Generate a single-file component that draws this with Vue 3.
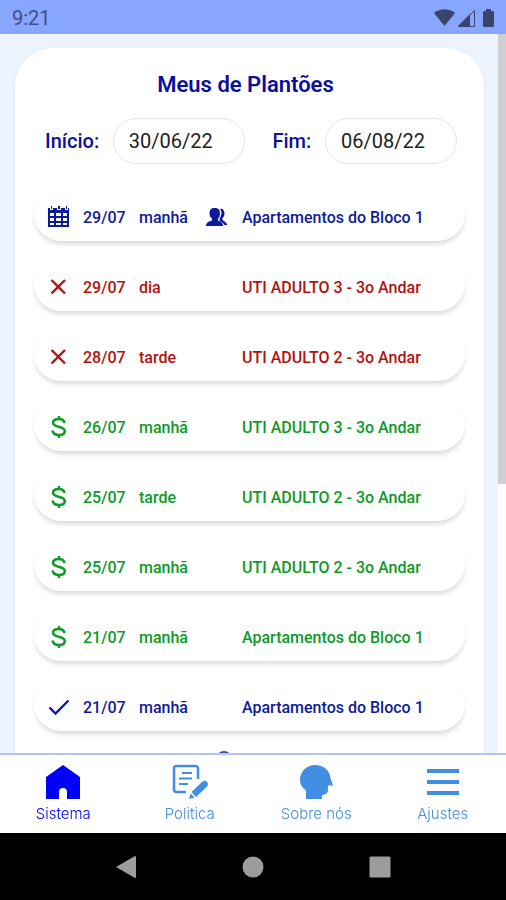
<script setup>
import { ref, onMounted, onUnmounted } from 'vue'

const inicio = ref('30/06/22')
const fim = ref('06/08/22')

const plantoes = [
  { data: '29/07', turno: 'manhã', local: 'Apartamentos do Bloco 1', status: 'agendado', troca: true },
  { data: '29/07', turno: 'dia', local: 'UTI ADULTO 3 - 3o Andar', status: 'cancelado' },
  { data: '28/07', turno: 'tarde', local: 'UTI ADULTO 2 - 3o Andar', status: 'cancelado' },
  { data: '26/07', turno: 'manhã', local: 'UTI ADULTO 3 - 3o Andar', status: 'pago' },
  { data: '25/07', turno: 'tarde', local: 'UTI ADULTO 2 - 3o Andar', status: 'pago' },
  { data: '25/07', turno: 'manhã', local: 'UTI ADULTO 2 - 3o Andar', status: 'pago' },
  { data: '21/07', turno: 'manhã', local: 'Apartamentos do Bloco 1', status: 'pago' },
  { data: '21/07', turno: 'manhã', local: 'Apartamentos do Bloco 1', status: 'confirmado' }
]

const abas = [
  { id: 'sistema', nome: 'Sistema' },
  { id: 'politica', nome: 'Politica' },
  { id: 'sobre', nome: 'Sobre nós' },
  { id: 'ajustes', nome: 'Ajustes' }
]
const abaAtiva = ref('sistema')

const lista = ref(null)
const barra = ref({ altura: 0, topo: 0 })

const atualizarBarra = () => {
  const el = lista.value
  barra.value = {
    altura: (el.clientHeight / el.scrollHeight) * 100,
    topo: (el.scrollTop / el.clientHeight) * 100
  }
}

onMounted(() => {
  atualizarBarra()
  window.addEventListener('resize', atualizarBarra)
})

onUnmounted(() => {
  window.removeEventListener('resize', atualizarBarra)
})
</script>

<template>
  <div class="tela">
    <header class="status-bar">
      <span>9:21</span>
      <svg width="64" height="20" viewBox="0 0 64 20" fill="#37456b">
        <path d="M0 5C6 0 15 0 21 5L10.500 18z" />
        <path d="M24 18L36 6V18z" />
        <path d="M24.500 18.500L40.500 2.500V18.500z" fill="none" stroke="#37456b" />
        <path d="M52 1h5v2h2q1 0 1 1v14q0 1-1 1h-9q-1 0-1-1v-14q0-1 1-1h2z" />
      </svg>
    </header>

    <div class="corpo">
      <main ref="lista" class="conteudo" @scroll="atualizarBarra">
        <section class="cartao">
          <h1>Meus de Plantões</h1>

          <div class="filtros">
            <label for="inicio">Início:</label>
            <input id="inicio" v-model="inicio" type="text">
            <label for="fim">Fim:</label>
            <input id="fim" v-model="fim" type="text">
          </div>

          <ul class="plantoes">
            <li v-for="(p, i) in plantoes" :key="i" class="plantao" :class="p.status">
              <svg v-if="p.status === 'agendado'" width="24" height="24" viewBox="0 0 24 24" fill="currentColor">
                <path fill-rule="evenodd" d="M1 3h2v2h3V3h4v2h4V3h4v2h3V3h1v19H1zM3 8v3h4V8zM9 8v3h5V8zM16 8v3h4V8zM3 13v3h4v-3zM9 13v3h5v-3zM16 13v3h4v-3zM3 18v2h4v-2zM9 18v2h5v-2zM16 18v2h4v-2z" />
                <path d="M4 1h1v3H4zM11 1h2v3h-2zM19 1h1v3h-1z" />
              </svg>
              <svg v-else-if="p.status === 'cancelado'" width="24" height="24" viewBox="0 0 24 24" fill="none" stroke="currentColor" stroke-width="2.400">
                <path d="M4.500 5L18 18.500M18 5L4.500 18.500" />
              </svg>
              <svg v-else-if="p.status === 'pago'" width="24" height="24" viewBox="0 0 24 24" fill="none" stroke="currentColor" stroke-width="2.500">
                <path d="M17.500 8C17 5 15 4 12 4C8.500 4 6 5.500 6 7.800C6 13 17.800 10.500 17.800 16C17.800 18.500 15.500 20 12.200 20C8.500 20 6 18.500 5.500 15.500M12 1v3M12 20v3" />
              </svg>
              <svg v-else width="24" height="24" viewBox="0 0 24 24" fill="none" stroke="currentColor" stroke-width="2.400">
                <path d="M2.500 12.500l6 6L21.500 5.500" />
              </svg>
              <span>{{ p.data }}</span>
              <span>{{ p.turno }}</span>
              <span>
                <svg v-if="p.troca" width="24" height="24" viewBox="0 0 24 24" fill="currentColor">
                  <path d="M9.500 3c4 0 5.500 2 5.500 5.500 0 3-1 4-2 5v2c2 1 5 2 5 5.500H1c0-3.500 3-4.500 6-5.500v-2c-1-1-2.500-2-2.500-5C4.500 5 6 3 9.500 3z" />
                  <path d="M15 4c3-1 4.500 2 4.500 4.500 0 2-1 3.500-2 4.500v2c2 1 4 3 5 5h-3c-1-2-3-3-5-4v-2c2-4 3-7 .500-10z" />
                </svg>
              </span>
              <span>{{ p.local }}</span>
            </li>
          </ul>

          <div class="carregando" />
        </section>
      </main>
      <div class="trilho">
        <div class="polegar" :style="{ height: barra.altura + '%', transform: `translateY(${barra.topo}%)` }" />
      </div>
    </div>

    <nav class="abas">
      <button v-for="aba in abas" :key="aba.id" type="button" :class="{ ativa: aba.id === abaAtiva }" @click="abaAtiva = aba.id">
        <svg v-if="aba.id === 'sistema'" width="36" height="36" viewBox="0 0 36 36" fill="currentColor">
          <path d="M18 1L35 13V35H22V28a4 4 0 0 0-8 0V35H1V13z" />
        </svg>
        <svg v-else-if="aba.id === 'politica'" width="36" height="36" viewBox="0 0 36 36" fill="none" stroke="currentColor" stroke-width="2.500">
          <path d="M14 28H4.500a2.500 2.500 0 0 1-2.500-2.500V4.500A2.500 2.500 0 0 1 4.500 2H23.500A2.500 2.500 0 0 1 26 4.500V15" />
          <path d="M10 9H20M7 14.500H20M7 20H16" stroke-width="2.200" />
          <path d="M17 35l1.500-5.500 4 4zM19.500 28L30 18Q33 15.500 35 18Q37 20.500 34.500 23L24 33z" fill="currentColor" stroke="none" />
        </svg>
        <svg v-else-if="aba.id === 'sobre'" width="36" height="36" viewBox="0 0 36 36" fill="currentColor">
          <path d="M17 1C26 1 32 7 32.500 14L35 21.500H30V26.500Q29.500 30.500 24 31V35H8V26.500C4 24 2 20 2 16C2 8 8 1 17 1z" />
        </svg>
        <svg v-else width="36" height="36" viewBox="0 0 36 36" fill="none" stroke="currentColor" stroke-width="3.800">
          <path d="M2 7H34M2 18H34M2 29H34" />
        </svg>
        <span>{{ aba.nome }}</span>
      </button>
    </nav>

    <footer class="sistema">
      <button type="button" aria-label="Voltar">
        <svg width="24" height="24" viewBox="0 0 24 24" fill="currentColor"><path d="M2 12L21 1q1 0 1 1v20q0 1-1 1z" /></svg>
      </button>
      <button type="button" aria-label="Início">
        <svg width="24" height="24" viewBox="0 0 24 24" fill="currentColor"><circle cx="12" cy="12" r="10.500" /></svg>
      </button>
      <button type="button" aria-label="Recentes">
        <svg width="24" height="24" viewBox="0 0 24 24" fill="currentColor"><rect x="1.500" y="1.500" width="21" height="21" rx="1.500" /></svg>
      </button>
    </footer>
  </div>
</template>

<style>
body {
  margin: 0;
}
</style>

<style scoped>
.tela {
  display: flex;
  flex-direction: column;
  height: 100vh;
  background: #fff;
  font-family: Roboto, "Liberation Sans", sans-serif;
}

.status-bar {
  display: flex;
  align-items: center;
  justify-content: space-between;
  height: 34px;
  padding: 2px 8px 0 12px;
  box-sizing: border-box;
  background: #88a5ff;
  color: #3f4f80;
  font-size: 20px;
}

.corpo {
  display: flex;
  flex: 1;
  min-height: 0;
}

.conteudo {
  flex: 1;
  padding: 14px 14px 14px 15px;
  background: #edf4ff;
  overflow-y: auto;
  scrollbar-width: none;
}

.cartao {
  min-height: 1120px;
  padding: 24px 19px;
  box-sizing: border-box;
  border-radius: 38px;
  background: #fff;
  box-shadow: 0 1px 3px rgba(0, 0, 0, 0.1);
}

h1 {
  margin: 0 0 20px;
  padding-right: 8px;
  color: #0a0f9e;
  font-size: 22px;
  font-weight: 600;
  line-height: 26px;
  text-align: center;
}

.filtros {
  display: flex;
  align-items: center;
  justify-content: space-between;
  padding: 0 8px 0 11px;
}

.filtros label {
  color: #0a0f9e;
  font-size: 20px;
  font-weight: 500;
}

.filtros label[for="fim"] {
  margin-left: 14px;
}

.filtros input {
  width: 132px;
  height: 46px;
  padding: 0 15px;
  box-sizing: border-box;
  border: 1px solid #e6e6e6;
  border-radius: 23px;
  background: #fff;
  color: #222;
  font-family: inherit;
  font-size: 20px;
}

.plantoes {
  display: grid;
  gap: 16px;
  margin: 0;
  padding: 23px 0 0;
  list-style: none;
}

.plantao {
  display: grid;
  grid-template-columns: 36px 56px 66px 37px 1fr;
  align-items: center;
  height: 54px;
  padding: 6px 0 0 13px;
  box-sizing: border-box;
  border-radius: 30px;
  box-shadow: 0 4px 5px -1px rgba(0, 0, 0, 0.15);
  font-size: 16px;
  font-weight: 500;
  white-space: nowrap;
}

.plantao svg {
  display: block;
}

.agendado,
.confirmado {
  color: #0d1a9c;
}

.cancelado {
  color: #b3120f;
}

.pago {
  color: #0d9a28;
}

.carregando {
  width: 16px;
  height: 16px;
  margin: 20px 0 0 182px;
  border-radius: 50%;
  background: #4a4e9e;
}

.trilho {
  width: 8px;
  background: #fdfdfd;
}

.polegar {
  background: #cfd0d4;
}

.abas {
  display: flex;
  height: 80px;
  box-sizing: border-box;
  border-top: 2px solid #b4c4f2;
}

.abas button {
  display: flex;
  flex: 1;
  flex-direction: column;
  align-items: center;
  gap: 4px;
  padding: 9px 0 0;
  border: 0;
  background: none;
  color: #428ee2;
  font-family: Inter, sans-serif;
  font-size: 15px;
  font-weight: 300;
  line-height: 20px;
}

.abas .ativa {
  color: #0000ff;
}

.sistema {
  display: flex;
  align-items: center;
  justify-content: space-around;
  height: 67px;
  padding: 0 62px;
  background: #000;
}

.sistema button {
  display: flex;
  justify-content: center;
  padding: 0;
  border: 0;
  background: none;
  color: #9c9c9c;
}
</style>
